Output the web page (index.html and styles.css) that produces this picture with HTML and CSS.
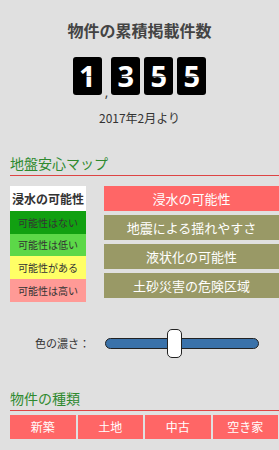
FILE: index.html
```html
<!DOCTYPE html>
<html lang="ja">
<head>
<meta charset="utf-8">
<link rel="stylesheet" href="styles.css">
</head>
<body>
<div class="page">
  <h1 class="title">物件の累積掲載件数</h1>
  <div class="counter">
    <span class="digit">1</span><span class="comma">,</span><span class="digit">3</span><span class="digit">5</span><span class="digit">5</span>
  </div>
  <p class="since">2017年2月より</p>

  <h2 class="section">地盤安心マップ</h2>
  <div class="map">
    <ul class="legend">
      <li class="lg lg-head">浸水の可能性</li>
      <li class="lg lg-none">可能性はない</li>
      <li class="lg lg-low">可能性は低い</li>
      <li class="lg lg-some">可能性がある</li>
      <li class="lg lg-high">可能性は高い</li>
    </ul>
    <div class="layers">
      <div class="layer active">浸水の可能性</div>
      <div class="layer">地震による揺れやすさ</div>
      <div class="layer">液状化の可能性</div>
      <div class="layer">土砂災害の危険区域</div>
    </div>
  </div>

  <div class="opacity">
    <span class="op-label">色の濃さ：</span>
    <div class="track"><div class="thumb"></div></div>
  </div>

  <h2 class="section section2">物件の種類</h2>
  <div class="types">
    <div class="type">新築</div>
    <div class="type">土地</div>
    <div class="type">中古</div>
    <div class="type">空き家</div>
  </div>
</div>
</body>
</html>
```
FILE: styles.css
```css
* { box-sizing: border-box; }
html, body { margin: 0; padding: 0; }
body {
  background: #e0e0e0;
  font-family: "Noto Sans CJK JP", "Noto Sans", sans-serif;
  color: #333;
  width: 279px;
  height: 450px;
  overflow: hidden;
}
.page { padding: 0 0 0 10px; }
.title {
  margin: 0;
  padding-top: 18px;
  padding-right: 10px;
  text-align: center;
  font-size: 16px;
  line-height: 24px;
  font-weight: bold;
  color: #444;
}
.counter {
  display: flex;
  justify-content: center;
  align-items: flex-end;
  margin-top: 15px;
  padding-right: 10px;
  gap: 4px;
}
.digit {
  width: 29px;
  height: 38px;
  background: #000;
  border-radius: 3px;
  color: #fff;
  font-family: "Open Sans", "DejaVu Sans", sans-serif;
  font-weight: bold;
  font-size: 29px;
  line-height: 38px;
  text-align: center;
  position: relative;
}
.digit::after {
  content: "";
  position: absolute;
  left: 0; right: 0; top: 19px;
  height: 1px;
  background: rgba(0,0,0,0.6);
}
.comma {
  font-family: "Open Sans", sans-serif;
  font-size: 14px;
  line-height: 14px;
  color: #333;
  margin: 0 -1px -4px -1px;
}
.since {
  margin: 14px 0 0 0;
  padding-right: 10px;
  text-align: center;
  font-size: 12px;
  line-height: 18px;
  color: #333;
}
.section {
  margin: 26px 0 0 0;
  font-size: 14px;
  font-weight: normal;
  line-height: 20px;
  color: #2f8a2f;
  border-bottom: 1px solid #dd4444;
  padding-bottom: 2px;
}
.map {
  display: flex;
  margin-top: 10px;
  gap: 18px;
}
.legend {
  list-style: none;
  margin: 0;
  padding: 0;
  width: 76px;
  flex: none;
}
.lg {
  height: 23px;
  font-size: 10px;
  line-height: 23px;
  text-align: center;
  color: #333;
}
.lg-head {
  height: 25px;
  line-height: 25px;
  background: #fff;
  font-size: 12px;
  font-weight: bold;
  color: #333;
}
.lg-none { background: #11a011; }
.lg-low { background: #5cd848; height: 22px; line-height: 22px; }
.lg-some { background: #ffff66; }
.lg-high { background: #ff9a96; }
.layers {
  flex: 1;
  display: flex;
  flex-direction: column;
  gap: 4px;
}
.layer {
  height: 25px;
  background: #999966;
  color: #fff;
  font-size: 13px;
  line-height: 25px;
  text-align: center;
}
.layer.active { background: #ff6666; }
.opacity {
  display: flex;
  align-items: center;
  margin-top: 26px;
  height: 30px;
}
.op-label {
  width: 95px;
  padding-left: 25px;
  font-size: 11px;
  color: #333;
  flex: none;
}
.track {
  width: 154px;
  height: 11px;
  background: #3a72aa;
  border: 1px solid #222;
  border-radius: 6px;
  position: relative;
}
.thumb {
  position: absolute;
  left: 61px;
  top: -10px;
  width: 15px;
  height: 29px;
  background: #fff;
  border: 1px solid #222;
  border-radius: 5px;
}
.section2 { margin-top: 30px; }
.types {
  display: grid;
  grid-template-columns: repeat(4, 1fr);
  gap: 2px;
  margin-top: 4px;
  padding-right: 1px;
}
.type {
  height: 24px;
  background: #ff6666;
  color: #fff;
  font-size: 12px;
  line-height: 24px;
  text-align: center;
}
```
